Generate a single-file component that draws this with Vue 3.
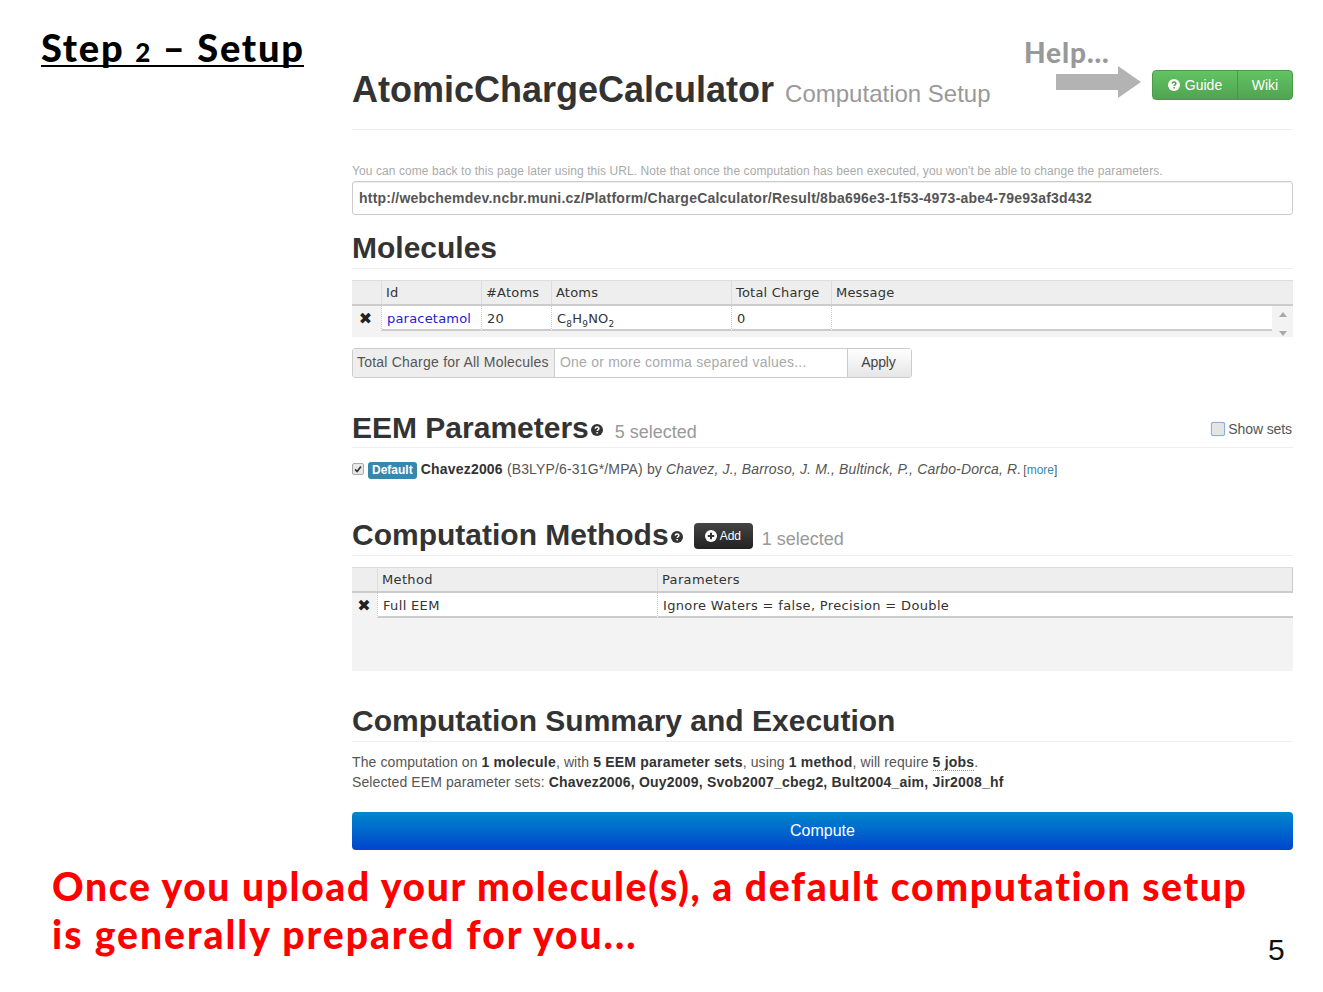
<script setup>
const molCols = [
  { t: '', w: 29 }, { t: 'Id', w: 100 }, { t: '#Atoms', w: 70 }, { t: 'Atoms', w: 180 }, { t: 'Total Charge', w: 100 }, { t: 'Message', w: 462 }
]
</script>

<template>
  <div class="slide">
    <div class="top">
      <aside class="side">
        <h1 class="step"><span>Step <small>2</small> – Setup</span></h1>
      </aside>
      <main class="page">
        <header class="head">
          <h1 class="brand">AtomicChargeCalculator <small>Computation Setup</small></h1>
          <div class="btns">
            <span class="btn first">
              <svg class="q" viewBox="0 0 12 12"><circle cx="6" cy="6" r="6" fill="#fff"/><path d="M4.2 4.6c.1-1 .9-1.5 1.9-1.5s1.8.6 1.8 1.5c0 1.4-1.7 1.3-1.7 2.5" fill="none" stroke="#4ea24e" stroke-width="1.5"/><rect x="5.4" y="8" width="1.5" height="1.5" fill="#4ea24e"/></svg>
              Guide
            </span>
            <span class="btn last">Wiki</span>
          </div>
          <div class="help">
            <span class="help-t">Help...</span>
            <svg class="arrow" width="86" height="32" viewBox="0 0 86 32"><path d="M0 8H62V0L85 16L62 32V24H0Z" fill="#b3b3b3"/></svg>
          </div>
        </header>

        <p class="note">You can come back to this page later using this URL. Note that once the computation has been executed, you won't be able to change the parameters.</p>
        <div class="url">http://webchemdev.ncbr.muni.cz/Platform/ChargeCalculator/Result/8ba696e3-1f53-4973-abe4-79e93af3d432</div>

        <h2 class="sec mol">Molecules</h2>
        <div class="tbl">
          <div class="tr th mol-grid">
            <div v-for="c in molCols" :key="c.t" class="c">{{ c.t }}</div>
          </div>
          <div class="tr td mol-grid">
            <div class="c x">✖</div>
            <div class="c link">paracetamol</div>
            <div class="c">20</div>
            <div class="c">C<sub>8</sub>H<sub>9</sub>NO<sub>2</sub></div>
            <div class="c">0</div>
            <div class="c end"></div>
            <div class="scroll"><i class="up"></i><i class="down"></i></div>
          </div>
          <div class="gap6"></div>
        </div>

        <div class="group">
          <span class="addon">Total Charge for All Molecules</span>
          <span class="field">One or more comma separed values...</span>
          <span class="apply">Apply</span>
        </div>

        <h2 class="sec eem">
          EEM Parameters<svg class="hint" viewBox="0 0 12 12"><circle cx="6" cy="6" r="6" fill="#333"/><path d="M4.2 4.6c.1-1 .9-1.5 1.9-1.5s1.8.6 1.8 1.5c0 1.4-1.7 1.3-1.7 2.5" fill="none" stroke="#fff" stroke-width="1.5"/><rect x="5.4" y="8" width="1.5" height="1.5" fill="#fff"/></svg>
          <small>5 selected</small>
          <label class="show"><i class="box"></i>Show sets</label>
        </h2>
        <div class="eem-row">
          <i class="check"><svg viewBox="0 0 12 12"><path d="M2.5 6.5L5 9L9.5 3" fill="none" stroke="#333" stroke-width="2"/></svg></i>
          <span class="badge">Default</span>
          <b>Chavez2006</b> (B3LYP/6-31G*/MPA) by <em>Chavez, J., Barroso, J. M., Bultinck, P., Carbo-Dorca, R.</em>
          <span class="more">[<span>more</span>]</span>
        </div>

        <h2 class="sec cm">
          Computation Methods<svg class="hint" viewBox="0 0 12 12"><circle cx="6" cy="6" r="6" fill="#333"/><path d="M4.2 4.6c.1-1 .9-1.5 1.9-1.5s1.8.6 1.8 1.5c0 1.4-1.7 1.3-1.7 2.5" fill="none" stroke="#fff" stroke-width="1.5"/><rect x="5.4" y="8" width="1.5" height="1.5" fill="#fff"/></svg>
          <span class="add"><svg viewBox="0 0 12 12"><circle cx="6" cy="6" r="6" fill="#fff"/><path d="M6 2.8v6.4M2.8 6h6.4" stroke="#333" stroke-width="2"/></svg>Add</span>
          <small>1 selected</small>
        </h2>
        <div class="tbl cm-tbl">
          <div class="tr th cm-grid">
            <div class="c"></div><div class="c">Method</div><div class="c">Parameters</div>
          </div>
          <div class="tr td cm-grid">
            <div class="c x">✖</div><div class="c">Full EEM</div><div class="c">Ignore Waters = false, Precision = Double</div>
          </div>
        </div>

        <h2 class="sec sum">Computation Summary and Execution</h2>
        <p class="summary">The computation on <b>1 molecule</b>, with <b>5 EEM parameter sets</b>, using <b>1 method</b>, will require <b class="dot">5 jobs</b>.<br>Selected EEM parameter sets: <b>Chavez2006, Ouy2009, Svob2007_cbeg2, Bult2004_aim, Jir2008_hf</b></p>
        <div class="compute">Compute</div>
      </main>
    </div>
    <p class="caption">Once you upload your molecule(s), a default computation setup<br><span class="line2">is generally prepared for you...</span></p>
    <span class="num">5</span>
  </div>
</template>

<style scoped>
.slide { position: relative; width: 1323px; height: 992px; overflow: hidden; background: #fff; font-family: "Liberation Sans", Arial, sans-serif; color: #333; }
.top { display: flex; height: 850px; }
.side { width: 352px; flex: none; padding: 28px 0 0 41px; box-sizing: border-box; }
.step { margin: 0; font: 900 38px/38px Lato, sans-serif; color: #000; letter-spacing: 1.75px; }
.step span { display: inline-block; border-bottom: 2px solid #000; height: 37px; width: 263px; white-space: nowrap; }
.step small { font-size: 26px; }
.page { width: 941px; flex: none; }
.head { position: relative; height: 130px; border-bottom: 1px solid #eee; box-sizing: border-box; display: flex; align-items: flex-start; justify-content: space-between; padding-top: 69px; }
.brand { margin: 0; font-size: 36px; line-height: 42px; font-weight: 700; white-space: nowrap; }
.brand small { font-size: 24px; font-weight: 400; color: #999; margin-left: 1px; }
.btns { display: flex; height: 30px; margin-top: 1px; border-radius: 4px; border: 1px solid #4a9c4a; box-sizing: border-box; background: linear-gradient(#62c462, #51a351); overflow: hidden; color: #fff; font-size: 14px; }
.btn { display: flex; align-items: center; justify-content: center; }
.btn.first { width: 85px; gap: 5px; border-right: 1px solid #469a46; box-sizing: border-box; }
.btn.last { width: 54px; }
.q { width: 12px; height: 12px; }
.help { position: absolute; right: 153px; top: 35px; width: 116px; height: 64px; }
.help-t { position: absolute; left: 0; top: 0; font: 900 28px/34px Lato, sans-serif; color: #999; letter-spacing: .9px; }
.arrow { position: absolute; left: 32px; top: 31px; }
.note { margin: 32px 0 0; font-size: 12px; line-height: 18px; color: #aaa; letter-spacing: .08px; white-space: nowrap; }
.url { height: 34px; margin-top: 1px; border: 1px solid #ccc; border-radius: 3px; box-sizing: border-box; padding: 0 6px; font-size: 14px; line-height: 32px; font-weight: 700; color: #555; box-shadow: inset 0 1px 1px rgba(0,0,0,.07); white-space: nowrap; letter-spacing: .22px; }
.sec { margin: 0; font-weight: 700; color: #333; border-bottom: 1px solid #eee; box-sizing: border-box; white-space: nowrap; position: relative; font-size: 30px; line-height: 36px; }
.sec small { font-weight: 400; color: #999; font-size: 18px; }
.mol { margin-top: 15px; height: 39px; }
.tbl { margin-top: 11px; background: #f3f3f3; font: 13px/24px "DejaVu Sans", Verdana, sans-serif; color: #333; letter-spacing: .2px; }
.tr { display: grid; position: relative; }
.mol-grid { grid-template-columns: 29px 100px 70px 180px 100px 441px 21px; }
.cm-grid { grid-template-columns: 25px 280px 636px; }
.th { background: #eee; height: 26px; border-top: 1px solid #ddd; border-bottom: 2px solid #ccc; box-sizing: border-box; }
.th .c { padding-left: 4px; border-left: 1px solid #ddd; height: 23px; line-height: 24px; }
.th .c:first-child { border-left: 0; }
.mol-grid.th { grid-template-columns: 29px 100px 70px 180px 100px 462px; }
.td { height: 26px; }
.td .c { background: #fff; padding-left: 5px; height: 25px; border-bottom: 2px solid #ccc; border-left: 1px dotted #ccc; box-sizing: border-box; line-height: 25px; }
.td .c sub { font-size: 9px; line-height: 0; }
.td .x { background: #f3f3f3; border-left: 0; border-bottom: 0; padding: 0 2px 0 0; text-align: center; font-size: 16px; color: #222; }
.cm-grid.td .x { padding: 0 1px 0 0; }
.link { color: #2222cc; }
.scroll { display: flex; flex-direction: column; align-items: center; justify-content: space-between; padding: 6px 0 0; height: 24px; gap: 7px; }
.up { width: 0; height: 0; border: 4px solid transparent; border-top: 0; border-bottom: 5px solid #aaa; }
.down { width: 0; height: 0; border: 4px solid transparent; border-bottom: 0; border-top: 5px solid #aaa; }
.gap6 { height: 5px; }
.group { display: flex; margin-top: 11px; width: 560px; height: 30px; font-size: 14px; line-height: 26px; border: 1px solid #ccc; border-radius: 3px; box-sizing: border-box; letter-spacing: .22px; }
.addon { width: 202px; flex: none; padding-left: 4px; box-sizing: border-box; background: #eee; border-right: 1px solid #ccc; color: #555; white-space: nowrap; }
.field { flex: 1; padding-left: 5px; color: #aaa; white-space: nowrap; }
.apply { width: 64px; flex: none; box-sizing: border-box; padding-right: 2px; text-align: center; border-left: 1px solid #ccc; background: linear-gradient(#fff, #e6e6e6); color: #444; letter-spacing: -.1px; }
.eem { margin-top: 32px; height: 38px; }
.hint { width: 12px; height: 12px; margin-left: 2px; vertical-align: 2px; }
.eem small { margin-left: 12px; }
.show { position: absolute; right: 1px; top: 9px; font-size: 14px; font-weight: 400; line-height: 20px; color: #555; display: flex; align-items: center; gap: 3px; letter-spacing: -.1px; }
.box { width: 14px; height: 14px; border: 1px solid #8ab0dc; background: #e4e4e4; border-radius: 2px; box-sizing: border-box; box-shadow: 0 0 1px #79a8e0; }
.eem-row { margin-top: 11px; font-size: 14px; line-height: 20px; color: #555; display: block; white-space: nowrap; letter-spacing: .15px; }
.eem-row b { color: #333; letter-spacing: .2px; }
.check { display: inline-block; width: 12px; height: 12px; border: 1px solid #aaa; border-radius: 2px; background: #e8e8e8; box-sizing: border-box; vertical-align: -1px; margin-right: 4px; }
.check svg { display: block; width: 10px; height: 10px; }
.badge { display: inline-block; background: #3a87ad; color: #fff; font-size: 12px; font-weight: 700; line-height: 15px; padding: 1px 4px; border-radius: 3px; margin-right: 4px; letter-spacing: 0; vertical-align: 0; }
.more { font-size: 12px; margin-left: 2px; letter-spacing: 0; }
.more span { color: #3a87ad; }
.cm { margin-top: 37px; height: 39px; }
.cm small { margin-left: 9px; }
.add { display: inline-flex; align-items: center; gap: 3px; height: 26px; width: 59px; padding-left: 11px; box-sizing: border-box; margin-left: 11px; border-radius: 4px; background: linear-gradient(#444, #222); color: #fff; font-size: 12px; font-weight: 400; line-height: 26px; vertical-align: 3px; }
.add svg { width: 12px; height: 12px; }
.cm-tbl { height: 104px; letter-spacing: .34px; }
.cm-tbl .th .c:last-child { border-right: 1px solid #ccc; }
.sum { margin-top: 32px; height: 39px; }
.summary { margin: 10px 0 0; font-size: 14px; line-height: 20px; color: #555; white-space: nowrap; letter-spacing: .1px; }
.summary b { color: #333; letter-spacing: .2px; }
.dot { border-bottom: 1px dotted #999; }
.compute { margin-top: 20px; height: 38px; border-radius: 4px; background: linear-gradient(#0088cc, #0044cc); color: #fff; font-size: 16px; line-height: 37px; text-align: center; }
.caption { margin: 12px 0 0 52px; font: 900 39px/48px Lato, sans-serif; color: #f00; white-space: nowrap; letter-spacing: 1.65px; }
.line2 { letter-spacing: 2px; }
.num { position: absolute; left: 1268px; top: 932px; font-size: 30px; line-height: 36px; color: #111; }
</style>
